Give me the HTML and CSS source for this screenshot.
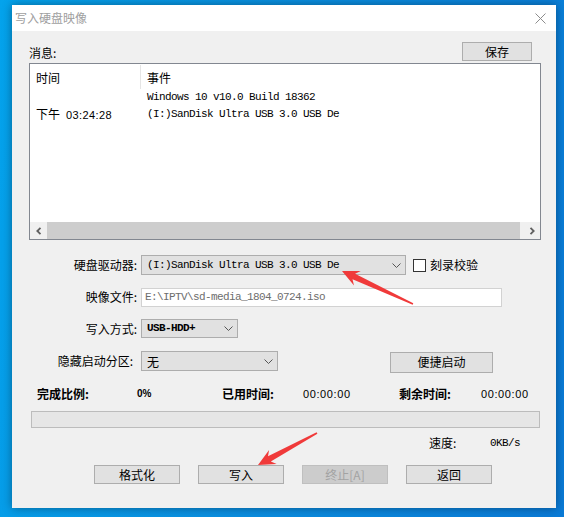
FILE: index.html
```html
<!DOCTYPE html>
<html lang="zh-CN">
<head>
<meta charset="utf-8">
<title>写入硬盘映像</title>
<link rel="stylesheet" href="styles.css">
</head>
<body>
<div class="desktop">
  <div class="window">
    <div class="titlebar">
      <span class="title">写入硬盘映像</span>
      <svg class="close" width="11" height="11" viewBox="0 0 11 11"><path d="M0.5 0.5 L10.5 10.5 M10.5 0.5 L0.5 10.5" stroke="#8c8c8c" stroke-width="1" fill="none"/></svg>
    </div>
    <div class="content">
      <div class="msg-row">
        <span class="msg-label">消息:</span>
        <div class="btn btn-save">保存</div>
      </div>

      <div class="listbox">
        <div class="list-head">
          <div class="cell">时间</div>
          <div class="cell sep">事件</div>
        </div>
        <div class="list-row">
          <div class="cell"></div>
          <div class="cell mono">Windows 10 v10.0 Build 18362</div>
        </div>
        <div class="list-row">
          <div class="cell"><span class="cjk">下午</span><span class="time list-time">03:24:28</span></div>
          <div class="cell mono">(I:)SanDisk Ultra USB 3.0 USB De</div>
        </div>
        <div class="hscroll">
          <div class="sb-btn sb-left"><svg width="6" height="8" viewBox="0 0 6 8"><path d="M4.5 0.8 L1.3 4 L4.5 7.2" stroke="#606060" stroke-width="1.8" fill="none"/></svg></div>
          <div class="sb-thumb"></div>
          <div class="sb-btn sb-right"><svg width="6" height="8" viewBox="0 0 6 8"><path d="M1.5 0.8 L4.7 4 L1.5 7.2" stroke="#606060" stroke-width="1.8" fill="none"/></svg></div>
        </div>
      </div>

      <div class="form">
        <div class="f-label">硬盘驱动器:</div>
        <div class="f-ctrl">
          <div class="combo combo-drive"><span class="mono">(I:)SanDisk Ultra USB 3.0 USB De</span><svg class="chev" width="9" height="5" viewBox="0 0 9 5"><path d="M0.5 0.5 L4.5 4.5 L8.5 0.5" stroke="#555" stroke-width="1" fill="none"/></svg></div>
          <div class="checkbox"></div>
          <span class="check-text">刻录校验</span>
        </div>

        <div class="f-label">映像文件:</div>
        <div class="f-ctrl">
          <div class="textbox"><span class="mono">E:\IPTV\sd-media_1804_0724.iso</span></div>
        </div>

        <div class="f-label">写入方式:</div>
        <div class="f-ctrl">
          <div class="combo combo-mode"><span class="mono bold">USB-HDD+</span><svg class="chev" width="9" height="5" viewBox="0 0 9 5"><path d="M0.5 0.5 L4.5 4.5 L8.5 0.5" stroke="#555" stroke-width="1" fill="none"/></svg></div>
        </div>

        <div class="f-label f-label-narrow">隐藏启动分区:</div>
        <div class="f-ctrl">
          <div class="combo combo-hide"><span class="cjk">无</span><svg class="chev" width="9" height="5" viewBox="0 0 9 5"><path d="M0.5 0.5 L4.5 4.5 L8.5 0.5" stroke="#555" stroke-width="1" fill="none"/></svg></div>
          <div class="btn btn-quick">便捷启动</div>
        </div>
      </div>

      <div class="status">
        <span class="st st-1 strong">完成比例:</span>
        <span class="st st-2 pct">0%</span>
        <span class="st st-3 strong">已用时间:</span>
        <span class="st st-4 time">00:00:00</span>
        <span class="st st-5 strong">剩余时间:</span>
        <span class="st time">00:00:00</span>
      </div>

      <div class="progress"></div>

      <div class="speed">
        <span class="speed-label">速度:</span>
        <span class="mono">0KB/s</span>
      </div>

      <div class="actions">
        <div class="btn btn-act">格式化</div>
        <div class="btn btn-act">写入</div>
        <div class="btn btn-act disabled">终止[A]</div>
        <div class="btn btn-act">返回</div>
      </div>
    </div>
  </div>

  <svg class="annot" width="564" height="517" viewBox="0 0 564 517">
    <polygon fill="#f03a3a" points="413.3,303.3 355.1,273.8 360.8,270.9 342,271 354.0,285.5 352.5,279.2 412.7,304.7"/>
    <polygon fill="#f03a3a" points="316.6,432.3 268.0,456.2 269.1,449.9 258,465 276.7,463.9 270.8,461.4 317.4,433.7"/>
  </svg>
</div>
</body>
</html>
```

FILE: styles.css
```css
html, body {
  margin: 0;
  padding: 0;
}

body {
  width: 564px;
  height: 517px;
  overflow: hidden;
  background: linear-gradient(100deg, #04a3ec 0%, #0a8fe0 45%, #0a7ad6 100%);
  font-family: "Noto Sans CJK SC", "Noto Sans", sans-serif;
  font-size: 12px;
  color: #000;
}

.desktop {
  position: relative;
  width: 564px;
  height: 517px;
  padding: 5px 0 0 12px;
  box-sizing: border-box;
}

.window {
  width: 544px;
  height: 503px;
  background: #f0f0f0;
  box-shadow: 0 0 9px rgba(0, 0, 0, 0.38);
  display: flex;
  flex-direction: column;
}

.titlebar {
  height: 26px;
  flex: none;
  background: #fff;
  display: flex;
  align-items: center;
  justify-content: space-between;
  padding: 0 10px 0 3px;
}

.title {
  color: #a0a0a0;
  font-size: 12px;
  line-height: 14px;
}

.close {
  display: block;
}

.content {
  padding: 11px 0 0 17px;
}

.mono {
  font-family: "Liberation Mono", "DejaVu Sans Mono", monospace;
  font-size: 11px;
  letter-spacing: -0.6px;
  line-height: 13px;
  white-space: pre;
}

.bold {
  font-weight: bold;
}

.cjk {
  font-family: "Noto Sans CJK SC", sans-serif;
  font-size: 12px;
}

.time {
  font-family: "Liberation Sans", Arial, sans-serif;
  font-size: 11px;
  letter-spacing: 0.6px;
}

.list-time {
  margin-left: 6px;
  letter-spacing: 0.4px;
}

/* message row */
.msg-row {
  width: 503px;
  height: 19px;
  display: flex;
  align-items: center;
  justify-content: space-between;
}

.msg-label {
  line-height: 14px;
  padding-top: 3px;
}

.btn {
  box-sizing: border-box;
  background: #e1e1e1;
  border: 1px solid #adadad;
  display: flex;
  align-items: center;
  justify-content: center;
  line-height: 14px;
  color: #000;
}

.btn-save {
  width: 70px;
  height: 19px;
}

/* list */
.listbox {
  margin-top: 2px;
  width: 512px;
  height: 177px;
  box-sizing: border-box;
  border: 1px solid #828790;
  background: #fff;
  display: flex;
  flex-direction: column;
}

.list-head,
.list-row {
  display: grid;
  grid-template-columns: 110px 1fr;
}

.list-head {
  height: 25px;
}

.list-head .cell {
  padding: 6px 0 0 6px;
  line-height: 16px;
}

.list-head .sep {
  border-left: 1px solid #e5e5e5;
  margin-top: 1px;
  padding-top: 5px;
}

.list-row {
  height: 17px;
  align-items: center;
}

.list-row .cell {
  padding-left: 6px;
  line-height: 15px;
}

.list-row .cell.mono {
  padding-left: 7px;
}

.hscroll {
  margin-top: auto;
  height: 17px;
  display: flex;
}

.sb-btn {
  background: #f0f0f0;
  display: flex;
  align-items: center;
  justify-content: center;
}

.sb-left {
  width: 17px;
}

.sb-right {
  width: 20px;
  padding-left: 4px;
  box-sizing: border-box;
}

.sb-btn svg {
  display: block;
}

.sb-thumb {
  flex: 1;
  background: #cdcdcd;
}

/* form */
.form {
  margin-top: 15px;
  display: grid;
  grid-template-columns: 112px auto;
  grid-auto-rows: 20px;
  row-gap: 12px;
  align-items: center;
}

.f-label {
  text-align: right;
  padding-right: 4px;
  line-height: 16px;
}

.f-label-narrow {
  padding-right: 8px;
}

.f-ctrl {
  display: flex;
  align-items: center;
  height: 20px;
}

.combo {
  box-sizing: border-box;
  height: 20px;
  background: #e1e1e1;
  border: 1px solid #adadad;
  display: flex;
  align-items: center;
  justify-content: space-between;
  padding: 0 4px 0 5px;
}

.combo .chev {
  display: block;
  flex: none;
}

.combo-drive {
  width: 265px;
}

.combo-mode {
  width: 97px;
  height: 19px;
  margin-top: -1px;
}

.combo-hide {
  width: 137px;
}

.combo-hide .cjk {
  line-height: 14px;
  padding-top: 2px;
}

.checkbox {
  width: 13px;
  height: 13px;
  box-sizing: border-box;
  border: 1px solid #333;
  background: #fff;
  margin-left: 7px;
}

.check-text {
  margin-left: 4px;
  line-height: 16px;
}

.textbox {
  box-sizing: border-box;
  width: 361px;
  height: 19px;
  background: #fff;
  border: 1px solid #d2d2d2;
  display: flex;
  align-items: center;
  padding-left: 3px;
  color: #6d6d6d;
}

.btn-quick {
  width: 103px;
  height: 21px;
  margin-left: 112px;
  margin-top: 2px;
}

/* status */
.status {
  margin-top: 15px;
  height: 16px;
  padding-left: 8px;
  display: flex;
  align-items: center;
}

.st {
  flex: none;
  line-height: 16px;
}

.st-1 { width: 100px; }
.st-2 { width: 85px; }
.st-3 { width: 81px; }
.st-4 { width: 96px; }
.st-5 { width: 82px; }

.strong {
  font-weight: bold;
}

.pct {
  font-family: "Liberation Sans", Arial, sans-serif;
  font-size: 10px;
  font-weight: bold;
}

.progress {
  margin: 9px 0 0 2px;
  width: 509px;
  height: 17px;
  box-sizing: border-box;
  border: 1px solid #bcbcbc;
  background: #e6e6e6;
}

/* speed */
.speed {
  margin-top: 7px;
  height: 16px;
  padding-left: 400px;
  display: flex;
  align-items: center;
}

.speed-label {
  width: 61px;
  line-height: 16px;
}

/* actions */
.actions {
  margin-top: 14px;
  padding-left: 65px;
  display: flex;
  gap: 18px;
}

.btn-act {
  width: 86px;
  height: 19px;
}

.btn.disabled {
  background: #cccccc;
  border-color: #bfbfbf;
  color: #a3a3a3;
}

/* annotation arrows overlay */
.annot {
  position: absolute;
  left: 0;
  top: 0;
  pointer-events: none;
}
```
